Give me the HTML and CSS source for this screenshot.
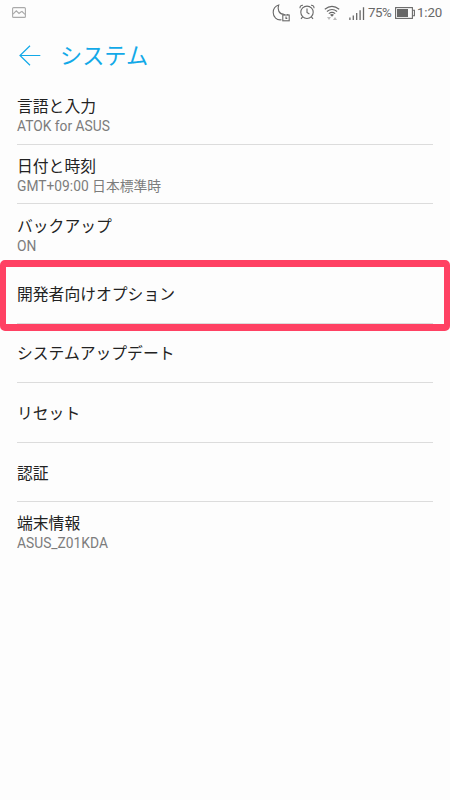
FILE: index.html
```html
<!DOCTYPE html>
<html lang="ja">
<head>
<meta charset="UTF-8" />
<title>システム</title>
<link rel="stylesheet" href="styles.css">
</head>
<body>
<div class="statusbar">
	<svg class="picture" width="14" height="11" viewBox="0 0 14 11"><rect x=".6" y=".6" width="12.8" height="9.8" rx="1"/><path d="M1 7.2L4.3 3.8L7 6.5L8.8 5L10 4.5L13 7.4"/></svg>
	<div class="status">
		<svg class="moon" width="19" height="18" viewBox="0 0 19 18"><path d="M9.5 15.7C4.800 16.500 1.200 13 1.200 8.600C1.200 5 3.200 2 6.700 1C4.900 5.600 7.200 10.300 12 10.300"/><rect x="10.800" y="11" width="6.400" height="5.800"/><path d="M12.300 10v1.200M15.700 10v1.200M14 12.600v1.800h1.300"/></svg>
		<svg class="alarm" width="16" height="16" viewBox="0 0 16 16"><circle cx="8" cy="8.3" r="6.2"/><path d="M8 4.4V8.5L10.4 10M1 4.3C.8 2.4 2.2 1 4 1.2M15 4.3C15.2 2.4 13.8 1 12 1.2M3.6 12.8L2 14.8M12.4 12.8L14 14.8"/></svg>
		<svg class="wifi" width="16" height="16" viewBox="0 0 16 16"><path d="M.8 4.200Q8-1.500 15.200 4.200M2.900 6.500Q8 2.500 13.100 6.500M4.800 8.600Q8 6.200 11.200 8.600"/><path class="solid" d="M6 9.700Q8 8.200 10 9.700L8 11.800Z"/><path class="arrows" d="M3 12h4l-2 3zM9 15h4l-2-3z"/></svg>
		<svg class="signal" width="16" height="13" viewBox="0 0 16 13"><path d="M.9 10.5V13M4.3 8.5V13M7.7 6V13M11.1 3.3V13M14.5 .2V13"/></svg>
		<span class="percent">75%</span>
		<svg class="battery" width="20" height="12" viewBox="0 0 20 12"><rect x=".6" y=".6" width="16.8" height="10.8"/><rect class="level" x="2" y="2" width="11" height="8"/><path d="M18 3.3h1.4v5.4H18"/></svg>
		<span class="clock">1:20</span>
	</div>
</div>
<div class="header">
	<svg class="back" width="22" height="21" viewBox="0 0 22 21"><path d="M11 .8L1 10.5L11 20.2M1 10.5H21.3"/></svg>
	<h1>システム</h1>
</div>
<div class="list">
	<div class="item"><div class="name">言語と入力</div><div class="desc">ATOK for ASUS</div></div>
	<div class="item"><div class="name">日付と時刻</div><div class="desc">GMT+09:00 日本標準時</div></div>
	<div class="item"><div class="name">バックアップ</div><div class="desc">ON</div></div>
	<div class="item marked"><div class="name">開発者向けオプション</div></div>
	<div class="item"><div class="name">システムアップデート</div></div>
	<div class="item"><div class="name">リセット</div></div>
	<div class="item"><div class="name">認証</div></div>
	<div class="item"><div class="name">端末情報</div><div class="desc">ASUS_Z01KDA</div></div>
</div>
</body>
</html>
```

FILE: styles.css
```css
*,*:after{box-sizing:border-box;}
body{margin:0;height:800px;overflow:hidden;background:#fdfdfd;color:#222;font-family:Roboto,"Noto Sans CJK JP",sans-serif;}
svg{display:block;flex:none;fill:none;stroke:#686868;stroke-width:1.1;}

/* status bar */
.statusbar{display:flex;justify-content:space-between;height:27px;padding:0 7px 0 12px;}
.picture{margin-top:7px;stroke:#aaa;}
.status{display:flex;color:#686868;font-size:13.3px;line-height:26px;white-space:nowrap;}
.moon{margin:4px 8px 0 0;}
.alarm{margin:4px 9px 0 0;}
.wifi{margin:5px 9px 0 0;}
.wifi .solid{fill:#686868;stroke:none;}
.wifi .arrows{fill:#bbb;stroke:none;}
.signal{margin:7px 3px 0 0;stroke-width:1.3;}
.percent{width:24px;margin-right:3px;letter-spacing:-.5px;}
.battery{margin:7px 2px 0 0;}
.battery .level{fill:#686868;stroke:none;}
.clock{width:26px;letter-spacing:-.1px;}

/* title */
.header{display:flex;align-items:center;height:58px;padding-left:19px;}
.back{margin:-1px 19px 0 0;stroke:#12a9e8;stroke-width:1.2;}
h1{margin:0;color:#12a9e8;font-size:22.2px;font-weight:400;line-height:32px;}

/* settings */
.list{padding:0 17px;}
.item{display:flex;flex-direction:column;justify-content:center;height:59.65px;padding-top:3px;border-bottom:1px solid #dcdcdc;}
.item:last-child{height:57px;border-bottom:0;}
.name{font-size:15.8px;line-height:22px;}
.desc{margin-top:-1px;color:#7c7c7c;font-size:13.8px;line-height:18px;}
.marked{position:relative;}
.marked:after{content:"";position:absolute;left:-17px;right:-17px;top:-4px;height:71px;border:6.5px solid #ff4163;border-width:7px 6px;border-radius:5px;}
```
